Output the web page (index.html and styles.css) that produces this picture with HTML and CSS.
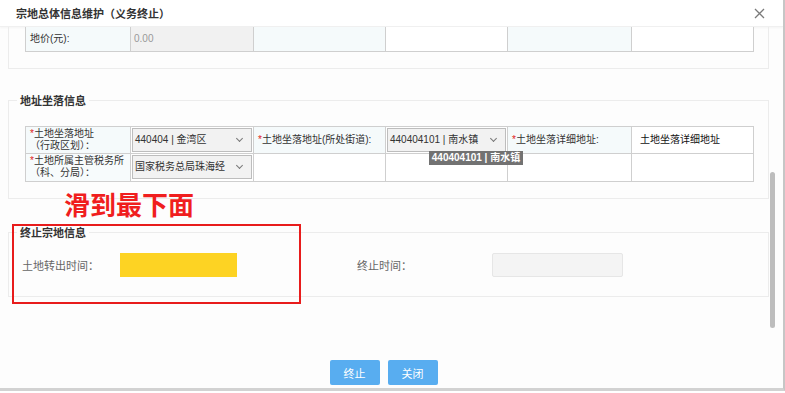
FILE: index.html
```html
<!DOCTYPE html>
<html lang="zh-CN">
<head>
  <meta charset="UTF-8" />
  <title>宗地总体信息维护（义务终止）</title>
  <link rel="stylesheet" href="styles.css">
</head>
<body>
  <div class="dialog">
    <div class="dlg-head">
      <span class="dlg-title">宗地总体信息维护（义务终止）</span>
      <svg class="dlg-close" width="11" height="11" viewBox="0 0 11 11"><path d="M1 1L10 10M10 1L1 10" stroke="#7a7a7a" stroke-width="1.3" fill="none"/></svg>
    </div>

    <div class="dlg-body">
      <div class="panel panel-cut">
        <table class="grid">
          <colgroup><col class="c1"><col class="c2"><col class="c3"><col class="c4"><col class="c5"><col class="c6"></colgroup>
          <tr class="row-a">
            <td class="lbl">地价(元):</td>
            <td class="ro">0.00</td>
            <td class="lbl"></td>
            <td></td>
            <td class="lbl"></td>
            <td></td>
          </tr>
        </table>
      </div>

      <fieldset class="panel">
        <legend>地址坐落信息</legend>
        <table class="grid grid-addr">
          <colgroup><col class="c1"><col class="c2"><col class="c3"><col class="c4"><col class="c5"><col class="c6"></colgroup>
          <tr class="row-b">
            <td class="lbl"><span class="req">*</span>土地坐落地址<br>（行政区划）：</td>
            <td><div class="sel">440404 | 金湾区<span class="chev"></span></div></td>
            <td class="lbl"><span class="req">*</span>土地坐落地址(所处街道):</td>
            <td class="tip-cell">
              <div class="sel">440404101 | 南水镇<span class="chev"></span></div>
              <div class="tip">440404101 | 南水镇</div>
            </td>
            <td class="lbl"><span class="req">*</span>土地坐落详细地址:</td>
            <td class="val">土地坐落详细地址</td>
          </tr>
          <tr class="row-c">
            <td class="lbl"><span class="req">*</span>土地所属主管税务所<br>（科、分局）：</td>
            <td><div class="sel">国家税务总局珠海经<span class="chev"></span></div></td>
            <td></td>
            <td></td>
            <td></td>
            <td></td>
          </tr>
        </table>
      </fieldset>

      <fieldset class="panel panel-end">
        <legend>终止宗地信息</legend>
        <div class="end-row">
          <span class="end-lbl">土地转出时间：</span>
          <span class="end-in end-hl"></span>
          <span class="end-lbl end-lbl2">终止时间：</span>
          <span class="end-in"></span>
        </div>
      </fieldset>

      <div class="note">滑到最下面</div>
      <div class="note-box"></div>
    </div>

    <div class="dlg-foot">
      <button class="btn">终止</button>
      <button class="btn">关闭</button>
    </div>

    <div class="thumb"></div>
  </div>
</body>
</html>
```

FILE: styles.css
```css
* {
  margin: 0;
  padding: 0;
  box-sizing: border-box;
}
body {
  font-family: "Liberation Sans", "Noto Sans CJK SC", sans-serif;
  background: #fff;
  color: #333;
  font-size: 11px;
}
.dialog {
  position: relative;
  width: 785px;
  height: 391px;
  background: #fdfdfd;
  border-right: 2px solid #c6c6c6;
  border-bottom: 3px solid #d2d2d2;
  overflow: hidden;
}
.dlg-head {
  height: 27px;
  display: flex;
  align-items: center;
  justify-content: space-between;
  padding: 0 18px 0 16px;
  background: #fff;
  border-bottom: 1px solid #f0f0f0;
  box-shadow: 0 1px 2px rgba(0,0,0,0.04);
}
.dlg-title {
  font-size: 11px;
  font-weight: bold;
  color: #333;
}
.dlg-body {
  position: relative;
  height: 318px;
  overflow: hidden;
}
.panel {
  margin: 0 14px 0 8px;
  border: 1px solid #ececec;
  min-width: 0;
}
.panel-cut {
  border-top: none;
  padding: 0 15px 16px 16px;
}
fieldset.panel {
  margin-top: 24px;
  padding: 17px 15px 16px 0;
}
fieldset.panel .grid {
  margin-left: 16px;
}
legend {
  margin-left: 8px;
  padding: 0 3px;
  font-size: 11px;
  line-height: 16px;
  font-weight: bold;
  color: #333;
}
.grid {
  width: 728px;
  table-layout: fixed;
  border-collapse: collapse;
  border: 1px solid #c4c4c4;
  font-size: 10px;
}
.c1 { width: 105px; }
.c2 { width: 123px; }
.c3 { width: 132px; }
.c4 { width: 122px; }
.c5 { width: 124px; }
.c6 { width: 122px; }
.grid td {
  border: 1px solid #cfcfcf;
  padding: 0 4px;
  background: #fff;
  line-height: 12px;
  vertical-align: middle;
  white-space: nowrap;
  overflow: hidden;
}
.panel-cut .grid {
  border-top: none;
}
.panel-cut .grid td {
  border-top: none;
}
.row-a td { height: 24px; }
.row-b td { height: 27px; }
.row-c td { height: 28px; }
.grid td.lbl {
  background: #f5fafb;
  color: #333;
}
.row-c td.lbl {
  background: #f7fbfc;
}
.grid td.ro {
  background: #f1f1f1;
  color: #999;
  padding-left: 3px;
}
.grid td.val {
  padding-left: 8px;
  color: #111;
}
.req {
  color: #e02020;
}
.sel {
  position: relative;
  height: 24px;
  line-height: 22px;
  margin: 0 -3px;
  padding-left: 2px;
  border: 1px solid #bdbdbd;
  background: #f2f2f2;
  color: #333;
  white-space: nowrap;
  overflow: hidden;
}
.chev {
  position: absolute;
  right: 9px;
  top: 7px;
  width: 5px;
  height: 5px;
  border-right: 1px solid #777;
  border-bottom: 1px solid #777;
  transform: rotate(45deg);
}
.tip-cell {
  position: relative;
}
.grid td.tip-cell {
  overflow: visible;
}
.tip {
  position: absolute;
  left: 43px;
  top: 24px;
  width: 94px;
  height: 14px;
  line-height: 14px;
  background: #727272;
  color: #fff;
  font-size: 10px;
  font-weight: bold;
  text-align: center;
  white-space: nowrap;
  z-index: 2;
}
fieldset.panel-end {
  margin-top: 26px;
  padding: 12px 15px 19px 0;
}
.end-row {
  display: flex;
  align-items: center;
  height: 24px;
  margin-left: 13px;
}
.end-lbl {
  width: 98px;
  color: #666;
}
.end-lbl2 {
  width: 135px;
  margin-left: 120px;
}
.end-in {
  width: 131px;
  height: 24px;
  background: #f4f4f4;
  border: 1px solid #e6e6e6;
  border-radius: 2px;
}
.end-hl {
  width: 117px;
  background: #fdd323;
  border-color: #fdd323;
  border-radius: 0;
}
.note {
  position: absolute;
  left: 64px;
  top: 162px;
  font-size: 26px;
  line-height: 30px;
  font-weight: bold;
  color: #f01e1e;
  font-family: "Noto Sans CJK SC", sans-serif;
}
.note-box {
  position: absolute;
  left: 12px;
  top: 197px;
  width: 289px;
  height: 80px;
  border: 2px solid #e81c1c;
}
.dlg-foot {
  display: flex;
  justify-content: center;
  gap: 8px;
  padding: 15px 16px 0 0;
}
.btn {
  width: 50px;
  height: 25px;
  border: none;
  border-radius: 2px;
  background: #58adf0;
  color: #fff;
  font-family: inherit;
  font-size: 11px;
}
.thumb {
  position: absolute;
  left: 770px;
  top: 172px;
  width: 5px;
  height: 156px;
  border-radius: 3px;
  background: #bdbdbd;
}
```
